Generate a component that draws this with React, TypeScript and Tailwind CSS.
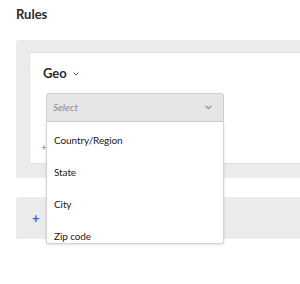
import React from 'react';

const options = ['Country/Region', 'State', 'City', 'Zip code'];

const Chevron = ({ className }: { className?: string }) => (
  <svg viewBox="0 0 10 6" className={className} fill="none" stroke="currentColor" strokeWidth="1.6" strokeLinecap="round" strokeLinejoin="round">
    <path d="M1.5 1.2 5 4.6l3.5-3.4" />
  </svg>
);

export default function App() {
  return (
    <div className="w-[300px] h-[284px] overflow-hidden bg-white text-[#2c2c2c]" style={{ fontFamily: 'Lato, "Open Sans", sans-serif' }}>
      <div className="pl-4 pt-[5px] text-[13px] font-bold leading-[18px]">Rules</div>

      <div className="ml-4 mt-[17px] w-[300px] bg-[#ebebeb] rounded-l-[3px] pt-3 pl-[13px] pb-[14px]">
        <div className="bg-white rounded-l-[3px] h-[112px] pl-[13px] pt-[12px] border border-r-0 border-[#e2e2e2]">
          <div className="flex items-center gap-[6px]">
            <span className="text-[13px] font-bold leading-[16px]">Geo</span>
            <Chevron className="w-[6px] h-[4px] text-[#555] mt-[2px]" />
          </div>

          <div className="relative ml-[3px] mt-[12px] w-[178px]">
            <div className="h-[29px] bg-[#e6e6e6] border border-[#cfcfcf] rounded-t-[3px] flex items-center justify-between pl-[6px] pr-[11px]">
              <span className="italic text-[10px] text-[#8a8a8a]">Select</span>
              <Chevron className="w-[7px] h-[5px] text-[#888]" />
            </div>
            <div className="absolute left-0 top-[29px] w-[178px] h-[122px] overflow-hidden bg-white border border-t-0 border-[#d3d3d3] rounded-b-[3px] shadow-[0_1px_3px_rgba(0,0,0,0.12)] z-10 pt-[2px]">
              {options.map(o => (
                <div key={o} className="h-8 flex items-center pl-[7px] text-[10px] tracking-[-0.1px] text-[#222]">
                  {o}
                </div>
              ))}
            </div>
            <div className="mt-[20px] -ml-[5px] text-[10px] leading-[10px] text-[#777]">+</div>
          </div>
        </div>
      </div>

      <div className="ml-4 mt-[19px] w-[300px] h-[42px] bg-[#ebebeb] rounded-l-[3px] flex items-center pl-4">
        <span className="text-[13px] font-bold text-[#3b63c4] leading-none">+</span>
      </div>
    </div>
  );
}
